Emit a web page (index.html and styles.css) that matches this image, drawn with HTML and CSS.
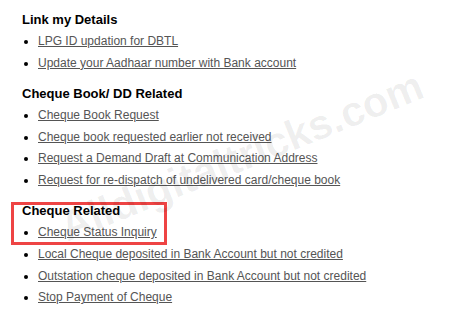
FILE: index.html
```html
<!DOCTYPE html>
<html>
<head>
<meta charset="utf-8">
<link rel="stylesheet" href="styles.css">
</head>
<body>
<div class="page">
  <section class="group">
    <h3 class="title">Link my Details</h3>
    <ul class="links">
      <li><a href="#">LPG ID updation for DBTL</a></li>
      <li><a href="#">Update your Aadhaar number with Bank account</a></li>
    </ul>
  </section>
  <section class="group">
    <h3 class="title">Cheque Book/ DD Related</h3>
    <ul class="links">
      <li><a href="#">Cheque Book Request</a></li>
      <li><a href="#">Cheque book requested earlier not received</a></li>
      <li><a href="#">Request a Demand Draft at Communication Address</a></li>
      <li><a href="#">Request for re-dispatch of undelivered card/cheque book</a></li>
    </ul>
  </section>
  <section class="group">
    <h3 class="title">Cheque Related</h3>
    <ul class="links">
      <li><a href="#">Cheque Status Inquiry</a></li>
      <li><a href="#">Local Cheque deposited in Bank Account but not credited</a></li>
      <li><a href="#">Outstation cheque deposited in Bank Account but not credited</a></li>
      <li><a href="#">Stop Payment of Cheque</a></li>
    </ul>
  </section>
  <div class="highlight"></div>
  <div class="watermark">Alldigitaltricks.com</div>
</div>
</body>
</html>
```
FILE: styles.css
```css
html, body {
  margin: 0;
  padding: 0;
  background: #ffffff;
}
.page {
  position: relative;
  width: 463px;
  height: 317px;
  overflow: hidden;
  box-sizing: border-box;
  padding: 9px 0 0 22px;
  font-family: "Liberation Sans", Arial, sans-serif;
}
.group {
  margin-bottom: 8.5px;
}
.title {
  margin: 0;
  font-size: 13px;
  font-weight: bold;
  line-height: 22px;
  color: #000;
}
.links {
  margin: 0;
  padding: 0 0 0 16px;
  list-style: disc;
}
.links li {
  font-size: 12px;
  line-height: 21.7px;
  color: #000;
}
.links a {
  color: #555555;
  text-decoration: underline;
}
.highlight {
  position: absolute;
  left: 11px;
  top: 202px;
  width: 150px;
  height: 37px;
  border: 3px solid #ee4444;
  pointer-events: none;
}
.watermark {
  position: absolute;
  left: 62px;
  top: 205px;
  font-size: 42px;
  font-weight: bold;
  color: rgba(0, 0, 0, 0.065);
  transform: rotate(-22deg);
  transform-origin: left center;
  white-space: nowrap;
  pointer-events: none;
}
```
